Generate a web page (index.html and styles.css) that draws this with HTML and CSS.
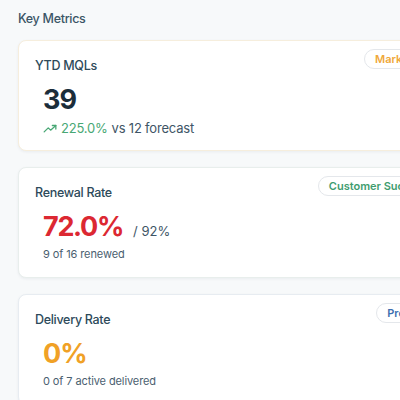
FILE: index.html
```html
<!DOCTYPE html>
<html lang="en">
<head>
<meta charset="utf-8">
<title>Key Metrics</title>
<link rel="stylesheet" href="styles.css">
</head>
<body>
<main class="page">
  <h2 class="section-title">Key Metrics</h2>
  <div class="cards">
    <section class="card card-marketing">
      <div class="card-head">
        <h3 class="card-label">YTD MQLs</h3>
        <span class="badge badge-marketing">Marketing</span>
      </div>
      <div class="value-row">
        <span class="value value-dark">39</span>
      </div>
      <div class="trend">
        <svg class="trend-icon" viewBox="0 0 24 24" width="14" height="14" fill="none" stroke="currentColor" stroke-width="2.2" stroke-linecap="round" stroke-linejoin="round"><polyline points="2 17 9 10 13 14 22 6"/><polyline points="16 6 22 6 22 12"/></svg>
        <span class="trend-pct">225.0%</span>
        <span class="trend-text">vs 12 forecast</span>
      </div>
    </section>

    <section class="card card-success">
      <div class="card-head">
        <h3 class="card-label">Renewal Rate</h3>
        <span class="badge badge-success">Customer Success</span>
      </div>
      <div class="value-row">
        <span class="value value-red">72.0%</span>
        <span class="target">/ 92%</span>
      </div>
      <p class="sub">9 of 16 renewed</p>
    </section>

    <section class="card card-product">
      <div class="card-head">
        <h3 class="card-label">Delivery Rate</h3>
        <span class="badge badge-product">Product</span>
      </div>
      <div class="value-row">
        <span class="value value-amber">0%</span>
      </div>
      <p class="sub">0 of 7 active delivered</p>
    </section>
  </div>
</main>
</body>
</html>
```

FILE: styles.css
```css
* { box-sizing: border-box; }

html, body {
  margin: 0;
  padding: 0;
  background: #f7f9fa;
  overflow: hidden;
}

body {
  font-family: Inter, "Noto Sans", sans-serif;
  color: #2d4858;
}

.page {
  width: 475px;
  padding: 10px 18px 0 18px;
}

.section-title {
  margin: 0;
  font-size: 12.5px;
  line-height: 17px;
  font-weight: 500;
  letter-spacing: -0.3px;
  color: #3b5566;
}

.cards {
  display: flex;
  flex-direction: column;
  gap: 16px;
  margin-top: 13px;
}

.card {
  background: #ffffff;
  border: 1px solid #e9edf0;
  border-radius: 8px;
  padding: 16px 16px 12px 16px;
  box-shadow: 0 1px 3px rgba(20, 40, 60, 0.06);
  height: 111px;
}

.card-marketing { border-color: #f6eedd; }
.card-success { border-color: #e8eeec; }
.card-product { border-color: #e7ecf1; }

.card-head {
  display: flex;
  justify-content: space-between;
  align-items: flex-start;
}

.card-label {
  margin: 0;
  font-size: 12.5px;
  line-height: 17px;
  font-weight: 500;
  letter-spacing: -0.3px;
  color: #2d4a5a;
}

.badge {
  margin-top: -8px;
  height: 20px;
  padding: 0 10px;
  border: 1px solid #e4e7eb;
  border-radius: 10px;
  background: #ffffff;
  font-size: 11px;
  line-height: 18px;
  font-weight: 600;
  white-space: nowrap;
}

.badge-marketing { color: #f0a83a; }
.badge-success { color: #3f9d6f; }
.badge-product { color: #3d6fb0; }

.value-row {
  display: flex;
  align-items: baseline;
  gap: 10px;
  margin-top: 10px;
  padding-left: 8px;
}

.value {
  font-size: 27px;
  line-height: 32px;
  font-weight: 700;
  letter-spacing: -1px;
}

.value-dark { color: #1b2d3a; }
.value-red { color: #dc2832; font-size: 27px; letter-spacing: -1.3px; }
.value-amber { color: #f0a126; }

.target {
  font-size: 13px;
  color: #3e5566;
}

.trend {
  display: flex;
  align-items: center;
  gap: 4px;
  margin-top: 4px;
  padding-left: 8px;
  font-size: 13px;
  line-height: 17px;
  letter-spacing: -0.2px;
}

.trend-icon { color: #48a774; }
.trend-pct { color: #48a774; }
.trend-text { color: #3e5566; }

.sub {
  margin: 4px 0 0 0;
  padding-left: 8px;
  font-size: 11px;
  line-height: 15px;
  letter-spacing: -0.1px;
  color: #4a6070;
}
```
